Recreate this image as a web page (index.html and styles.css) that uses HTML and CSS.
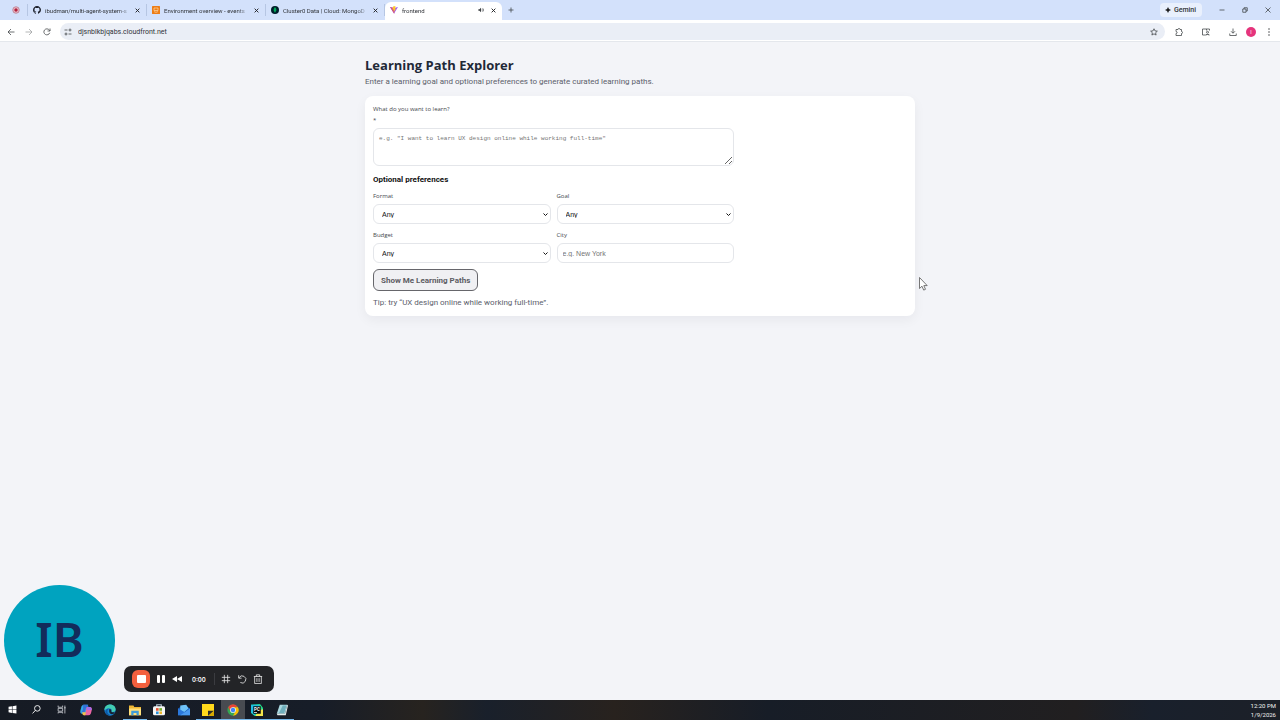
FILE: index.html
```html
<!DOCTYPE html>
<html lang="en">
<head>
  <meta charset="utf-8">
  <meta name="viewport" content="width=device-width, initial-scale=1">
  <title>frontend</title>
  <link rel="stylesheet" href="styles.css">
</head>
<body>

  <header class="browser">
    <nav class="tabs" aria-label="Tabs">
      <button class="tab tab-pinned" aria-label="Recording">
        <svg class="icon" viewBox="0 0 16 16"><circle cx="8" cy="8" r="6.5" fill="#e9c3cf" stroke="#b66f83" stroke-width="1.5"/><circle cx="8" cy="8" r="3.5" fill="#b3203c"/></svg>
      </button>
      <div class="tab">
        <svg class="icon" viewBox="0 0 16 16" fill="#1b1f2a"><path d="M8 0C3.58 0 0 3.58 0 8c0 3.54 2.29 6.53 5.47 7.59.4.07.55-.17.55-.38v-1.49c-2.01.37-2.53-.49-2.69-.94-.09-.23-.48-.94-.82-1.13-.28-.15-.68-.52-.01-.53.63-.01 1.08.58 1.23.82.72 1.21 1.87.87 2.33.66.07-.52.28-.87.51-1.07-1.78-.2-3.64-.89-3.64-3.95 0-.87.31-1.59.82-2.15-.08-.2-.36-1.02.08-2.12 0 0 .67-.21 2.2.82a7.6 7.6 0 0 1 4 0c1.53-1.04 2.2-.82 2.2-.82.44 1.1.16 1.92.08 2.12.51.56.82 1.27.82 2.15 0 3.07-1.87 3.75-3.65 3.95.29.25.54.73.54 1.48v2.2c0 .21.15.46.55.38A8 8 0 0 0 16 8c0-4.42-3.58-8-8-8z"/></svg>
        <span class="tab-title">ibudman/multi-agent-system-s</span>
        <button class="close" aria-label="Close tab"><svg viewBox="0 0 8 8"><path d="M1 1l6 6M7 1L1 7"/></svg></button>
      </div>
      <div class="tab">
        <svg class="icon" viewBox="0 0 16 16"><rect width="16" height="16" rx="1" fill="#ed7d16"/><path d="M4 4h8v5H4zM4 11c2 2 6 2 8 0" fill="none" stroke="#ffd9a8" stroke-width="1.4"/></svg>
        <span class="tab-title">Environment overview - events</span>
        <button class="close" aria-label="Close tab"><svg viewBox="0 0 8 8"><path d="M1 1l6 6M7 1L1 7"/></svg></button>
      </div>
      <div class="tab">
        <svg class="icon" viewBox="0 0 16 16"><circle cx="8" cy="8" r="8" fill="#001e2b"/><path d="M8 2c4 4 3.500 8 0 10.500C4.500 10 4 6 8 2zM7.600 12h.8v2h-.8z" fill="#00a85a"/></svg>
        <span class="tab-title">Cluster0 Data | Cloud: MongoD</span>
        <button class="close" aria-label="Close tab"><svg viewBox="0 0 8 8"><path d="M1 1l6 6M7 1L1 7"/></svg></button>
      </div>
      <div class="tab tab-active">
        <svg class="icon" viewBox="0 0 16 16"><path d="M0 2l8 13 8-13-8 2z" fill="#a05cf0"/><path d="M0 2l8 2 1 11-1 0z" fill="#d2547f"/><path d="M6 1l5-1-1 5h2l-4.500 7V7H5z" fill="#ffc72b"/></svg>
        <span class="tab-title">frontend</span>
        <button class="sound" aria-label="Mute tab"><svg viewBox="0 0 16 16"><path d="M1 6h3l4-4v12l-4-4H1z" fill="#3c4043"/><path d="M10 5c2 2 2 4 0 6M12 3c4 3 4 7 0 10" fill="none" stroke="#3c4043" stroke-width="1.500"/></svg></button>
        <button class="close" aria-label="Close tab"><svg viewBox="0 0 8 8"><path d="M1 1l6 6M7 1L1 7"/></svg></button>
      </div>
      <button class="new-tab" aria-label="New tab"><svg class="line" viewBox="0 0 12 12"><path d="M6 1v10M1 6h10"/></svg></button>

      <div class="window-controls">
        <button class="gemini"><svg viewBox="0 0 12 12"><path d="M6 0q1 5 6 6-5 1-6 6-1-5-6-6 5-1 6-6z" fill="#1f1f1f"/></svg>Gemini</button>
        <button aria-label="Minimize"><svg class="line" viewBox="0 0 12 12"><path d="M1 6h10"/></svg></button>
        <button aria-label="Restore"><svg class="line" viewBox="0 0 12 12"><path d="M1.500 4h6.500v6.500H1.500zM4 4V1.500h6.500V8H8"/></svg></button>
        <button aria-label="Close"><svg class="line" viewBox="0 0 12 12"><path d="M1 1l10 10M11 1L1 11"/></svg></button>
      </div>
    </nav>

    <div class="toolbar">
      <div class="nav-buttons">
        <button aria-label="Back"><svg class="line" viewBox="0 0 16 16"><path d="M15 8H2M8 2L2 8l6 6"/></svg></button>
        <button aria-label="Forward" disabled><svg class="line" viewBox="0 0 16 16"><path d="M1 8h13M8 2l6 6-6 6"/></svg></button>
        <button aria-label="Reload"><svg class="line" viewBox="0 0 16 16"><path d="M13.500 9.500A6 6 0 1 1 12.500 4L14 5.500M14 1v5H9"/></svg></button>
      </div>
      <div class="omnibox">
        <svg class="line" viewBox="0 0 16 16"><path d="M1 4h6M9 12h6"/><circle cx="12" cy="4" r="2"/><circle cx="4" cy="12" r="2"/></svg>
        <input class="address" type="text" aria-label="Address" value="djsnblkbjqabs.cloudfront.net">
        <button aria-label="Bookmark"><svg class="line" viewBox="0 0 16 16"><path d="M8 1.500l2 4.300 4.700.5-3.500 3.200 1 4.600L8 11.700l-4.200 2.400 1-4.600L1.300 6.300 6 5.800z"/></svg></button>
      </div>
      <div class="actions">
        <button aria-label="Extensions"><svg class="line" viewBox="0 0 16 16"><path d="M2 3h4c0-3 4-3 4 0h3v4c3 0 3 4 0 4v4H2v-4c3 0 3-4 0-4z"/></svg></button>
        <button aria-label="Side panel"><svg class="line" viewBox="0 0 16 16"><path d="M7 14H1V2h14v3M9 2v3"/><circle cx="11" cy="8.500" r="2"/><path d="M8 15v-2h6v2"/></svg></button>
        <button aria-label="Downloads"><svg class="line" viewBox="0 0 16 16"><path d="M8 1v9M4 6.500l4 4 4-4M1.500 11v4h13v-4"/></svg></button>
        <button class="profile" aria-label="Profile">I</button>
        <button aria-label="Menu"><svg viewBox="0 0 16 16" fill="#3c4043"><circle cx="8" cy="2" r="1.500"/><circle cx="8" cy="8" r="1.500"/><circle cx="8" cy="14" r="1.500"/></svg></button>
      </div>
    </div>
  </header>

  <main class="page">
    <div class="container">
      <h1>Learning Path Explorer</h1>
      <p class="subtitle">Enter a learning goal and optional preferences to generate curated learning paths.</p>

      <section class="card">
        <form class="search-form" onsubmit="return false;">
          <label class="query-label" for="query">What do you want to learn? <span class="required">*</span></label>
          <textarea id="query" placeholder='e.g. "I want to learn UX design online while working full-time"'></textarea>

          <h2>Optional preferences</h2>
          <div class="prefs">
            <div class="field">
              <label for="format">Format</label>
              <div class="select">
                <select id="format"><option>Any</option></select>
                <svg viewBox="0 0 10 6"><path d="M1 1l4 4 4-4"/></svg>
              </div>
            </div>
            <div class="field">
              <label for="goal">Goal</label>
              <div class="select">
                <select id="goal"><option>Any</option></select>
                <svg viewBox="0 0 10 6"><path d="M1 1l4 4 4-4"/></svg>
              </div>
            </div>
            <div class="field">
              <label for="budget">Budget</label>
              <div class="select">
                <select id="budget"><option>Any</option></select>
                <svg viewBox="0 0 10 6"><path d="M1 1l4 4 4-4"/></svg>
              </div>
            </div>
            <div class="field">
              <label for="city">City</label>
              <input id="city" type="text" placeholder="e.g. New York">
            </div>
          </div>

          <button class="submit" type="submit">Show Me Learning Paths</button>
        </form>
        <p class="tip">Tip: try “UX design online while working full-time”.</p>
      </section>
    </div>
  </main>

  <footer class="taskbar">
    <div class="apps">
      <button aria-label="Start"><svg viewBox="0 0 16 16" fill="#fff"><path d="M1 3l6-1v5.500H1zM8 2l7-1v6.500H8zM1 8.500h6V14l-6-1zM8 8.500h7V15l-7-1z"/></svg></button>
      <button aria-label="Search"><svg viewBox="0 0 16 16" fill="none" stroke="#fff" stroke-width="1.600"><circle cx="9.500" cy="6" r="5"/><path d="M6 9.500L1 15"/></svg></button>
      <button aria-label="Task view"><svg viewBox="0 0 16 16" fill="none" stroke="#d5d8dc" stroke-width="1.400"><path d="M2 1v3h8V1M2 6h8v5H2zM2 15v-2h8v2M14 1v14M12.500 5h3"/></svg></button>
      <button aria-label="Copilot"><svg viewBox="0 0 16 16"><path d="M5 1h6L7 13H3C0 13 0 10 1 7l1-4q1-2 3-2z" fill="#32a6e8"/><path d="M4 1h6l2 4H8L6 11H1q4-1 3-10z" fill="#3170d8"/><path d="M9 4h4q4 0 2.500 5l-1 3.500Q13.500 15 11 15H5l2-3z" fill="#e965a6"/><path d="M3 11h5l-1 4H5q-2 0-2-4z" fill="#f2c14b"/><path d="M10 4h4q2 1 1.500 4H9z" fill="#a46bea"/></svg></button>
      <button aria-label="Edge"><svg viewBox="0 0 16 16"><circle cx="8" cy="8" r="7.500" fill="#1684d1"/><path d="M.5 8C1 2 5 .5 8 .5c5 0 7.500 3.500 7.500 6.500S13 11 10 10.500c1-1 1-5-3-5S1 8 .5 8z" fill="#42cdb2"/><path d="M7 6c-4 2-3 8 2 9C4 16 1 12 2 9q1-3 5-3z" fill="#0e58a5"/><path d="M7 7q3-1 3 3.500 3 1 4.500 0-1 3-4 3Q6 13 7 7z" fill="#172231"/></svg></button>
      <button class="open" aria-label="File Explorer"><svg viewBox="0 0 16 16"><path d="M0 2h6l1 2h9v11H0z" fill="#eeb735"/><path d="M0 6h16v9H0z" fill="#ffdf7b"/><path d="M3 9h10v6h-3v-3H6v3H3z" fill="#3e9cd9"/></svg></button>
      <button aria-label="Store"><svg viewBox="0 0 16 16"><path d="M5 4V1h6v3" fill="none" stroke="#b8c8d5" stroke-width="1.500"/><rect y="3" width="16" height="12" rx="2" fill="#f6f6f6"/><path d="M4 5.500h3.500V9H4z" fill="#e65333"/><path d="M8.500 5.500H12V9H8.500z" fill="#72ae2e"/><path d="M4 10h3.500v3.500H4z" fill="#2c91d8"/><path d="M8.500 10H12v3.500H8.500z" fill="#edb62b"/></svg></button>
      <button aria-label="Mail"><svg viewBox="0 0 16 16"><path d="M0 6l8-5 8 5v9H0z" fill="#175bb7"/><path d="M3 2l8-1 3 5-6 5-5-3z" fill="#6fc3f8"/><path d="M0 6l9 5-4 4H0z" fill="#2b78db"/><path d="M16 6L3 15h13z" fill="#4a9af0"/></svg></button>
      <button class="open" aria-label="Sticky Notes"><svg viewBox="0 0 16 16"><path d="M0 0h16v16H0z" fill="#ffd91c"/><path d="M8 16V9h8z" fill="#2d2c28"/><path d="M8 16l8-7v7z" fill="#d7a900"/></svg></button>
      <button class="open current" aria-label="Chrome"><svg viewBox="0 0 16 16"><circle cx="8" cy="8" r="7.500" fill="#34a853"/><path d="M1.500 4.250A7.500 7.500 0 0 1 14.500 4.250H8L4.700 9.900z" fill="#ea4335"/><path d="M14.500 4.250A7.500 7.500 0 0 1 8 15.500l3.250-5.600L8 4.250z" fill="#fbbc05"/><circle cx="8" cy="8" r="3.800" fill="#fff"/><circle cx="8" cy="8" r="3" fill="#4285f4"/></svg></button>
      <button class="open" aria-label="PyCharm"><svg viewBox="0 0 16 16"><path d="M0 1l12-1 4 5v11H5L0 12z" fill="#21d789"/><path d="M0 1h11l2 7-9 7-4-4z" fill="#20bfe3"/><path d="M9 9l7-2v9H6z" fill="#f5e64b"/><path d="M3 3h10v10H3z" fill="#080808"/><text x="4" y="9" class="pc">PC</text><path d="M4 11h4v1H4z" fill="#fff"/></svg></button>
      <button class="open" aria-label="Notepad"><svg viewBox="0 0 16 16"><path d="M5 1h10l-3 12H1z" fill="#a9d7df"/><path d="M9 2h5l-3 10H4z" fill="#6faebc"/><path d="M1 13h11l3-12 1 1-3 13H2z" fill="#e4ecec"/></svg></button>
    </div>
    <div class="clock"><span>12:20 PM</span><span>1/9/2026</span></div>
  </footer>

  <div class="avatar">IB</div>

  <div class="recorder">
    <button class="stop" aria-label="Stop"><svg viewBox="0 0 18 18"><rect width="18" height="18" rx="6" fill="#f4603e"/><rect x="5" y="5" width="9" height="8" rx="1" fill="#fff"/></svg></button>
    <button aria-label="Pause"><svg viewBox="0 0 10 10" fill="#fff"><rect x="1" y="1" width="3" height="8" rx="1"/><rect x="6" y="1" width="3" height="8" rx="1"/></svg></button>
    <button aria-label="Rewind"><svg viewBox="0 0 10 10" fill="#fff"><path d="M5 2v6L0 5zM10 2v6L5 5z"/></svg></button>
    <span class="time">0:00</span>
    <span class="divider"></span>
    <button aria-label="Grid"><svg class="line light" viewBox="0 0 12 12"><path d="M4 1v10M8 1v10M1 4h10M1 8h10"/></svg></button>
    <button aria-label="Restart"><svg class="line light" viewBox="0 0 12 12"><path d="M2 1.500V5h3.500M2.500 4.500A4.300 4.300 0 1 1 4 10.200"/></svg></button>
    <button aria-label="Delete"><svg class="line light" viewBox="0 0 12 12"><path d="M1 3h10M4 3V1h4v2M2 3v8.500h8V3M4.700 5v4.500M7.300 5v4.500"/></svg></button>
  </div>

  <svg class="cursor" viewBox="0 0 9 14"><path d="M.5.5v11l2.500-2.300 1.700 3.900 1.800-.8-1.700-3.700h3.400z" fill="#fff" stroke="#555" stroke-width=".8"/></svg>

</body>
</html>
```
FILE: styles.css
```css
* {
  box-sizing: border-box;
}

body {
  margin: 0;
  min-height: 100vh;
  display: flex;
  flex-direction: column;
  background: #f3f4f8;
  color: #111827;
  font-family: Roboto, "Open Sans", sans-serif;
  font-size: 8px;
}

button {
  margin: 0;
  padding: 0;
  border: 0;
  background: none;
  font: inherit;
  color: inherit;
}

svg {
  display: block;
  flex: none;
}

.line {
  fill: none;
  stroke: #3c4043;
  stroke-width: 1.5;
}

.light {
  stroke: #e5e5e5;
  stroke-width: 1;
}

/* browser */

.browser {
  font-size: 6px;
  color: #303338;
}

.tabs {
  display: flex;
  align-items: center;
  height: 20px;
  padding-left: 4px;
  background: #d3e1fb;
}

.tab {
  display: flex;
  align-items: center;
  gap: 4px;
  width: 119px;
  height: 12px;
  padding: 0 6px 0 5px;
  border-right: 1px solid #b6c6e3;
}

.tab-pinned {
  width: 24px;
  padding-left: 8px;
}

.icon {
  width: 8px;
  height: 8px;
}

.tab-title {
  flex: 1;
  overflow: hidden;
  white-space: nowrap;
  -webkit-mask-image: linear-gradient(90deg, #000 85%, transparent);
  mask-image: linear-gradient(90deg, #000 85%, transparent);
}

.tab-active {
  align-self: flex-end;
  width: 117px;
  height: 18px;
  padding-bottom: 2px;
  border: 0;
  border-radius: 6px 6px 0 0;
  background: #fff;
}

.close svg {
  width: 5px;
  height: 5px;
  fill: none;
  stroke: #202124;
  stroke-width: 1.5;
}

.sound {
  margin-right: 3px;
}

.sound svg {
  width: 6px;
  height: 6px;
}

.new-tab {
  padding: 0 6px;
}

.new-tab svg {
  width: 6px;
  height: 6px;
}

.window-controls {
  display: flex;
  align-items: center;
  gap: 17px;
  margin-left: auto;
  padding-right: 9px;
}

.window-controls svg {
  width: 6px;
  height: 6px;
}

.gemini {
  display: flex;
  align-items: center;
  gap: 3px;
  height: 14px;
  padding: 0 6px 0 5px;
  border-radius: 4px;
  background: #e9f0fd;
  font-size: 7px;
  font-weight: 500;
}

.toolbar {
  display: flex;
  align-items: center;
  height: 22px;
  padding: 2px 7px 0;
  border-bottom: 1px solid #e4e7ec;
  background: #fff;
}

.nav-buttons {
  display: flex;
  gap: 10px;
  margin-right: 9px;
}

.toolbar svg {
  width: 8px;
  height: 8px;
}

.toolbar button:disabled {
  opacity: 0.5;
}

.omnibox {
  flex: 1;
  display: flex;
  align-items: center;
  gap: 6px;
  height: 17px;
  padding: 0 7px 0 4px;
  border-radius: 9px;
  background: #eaeef6;
}

.address {
  flex: 1;
  min-width: 0;
  padding: 0;
  border: 0;
  background: none;
  color: #303338;
  font: inherit;
  font-size: 7px;
}

.actions {
  display: flex;
  align-items: center;
  gap: 19px;
  margin-left: 10px;
}

.actions .profile {
  width: 10px;
  height: 10px;
  margin: 0 -10px;
  border-radius: 50%;
  background: #e5347c;
  color: #fff;
  font-size: 5px;
}

/* page */

.page {
  flex: 1;
  padding: 13px 16px 40px;
}

.container {
  max-width: 550px;
  margin: 0 auto;
}

h1 {
  margin: 0;
  color: #1f2937;
  font-family: "Open Sans", "Noto Sans", sans-serif;
  font-size: 13px;
  line-height: 20px;
}

.subtitle,
.tip {
  color: #5b606b;
  font-size: 8px;
  line-height: 12px;
}

.subtitle {
  margin: 1px 0 8px;
}

.card {
  padding: 8px 8px 7px;
  border-radius: 8px;
  background: #fff;
  box-shadow: 0 4px 12px rgba(15, 23, 42, 0.05);
}

.search-form {
  max-width: 361px;
}

label {
  display: block;
  color: #44474d;
  font-family: "Open Sans", "Noto Sans", sans-serif;
  font-size: 6px;
  line-height: 9px;
}

.query-label {
  line-height: 11px;
}

.required {
  display: block;
}

textarea,
select,
#city {
  display: block;
  width: 100%;
  border: 1px solid #e4e6ea;
  border-radius: 6px;
  background: #fff;
}

textarea {
  height: 38px;
  margin-top: 2px;
  padding: 5px;
  font-family: "Liberation Mono", monospace;
  font-size: 6px;
  line-height: 10px;
}

::placeholder {
  color: #757575;
}

h2 {
  margin: 8px 0 7px;
  color: #111;
  font-size: 8px;
  line-height: 11px;
}

.prefs {
  display: grid;
  grid-template-columns: 1fr 1fr;
  gap: 7px 6px;
}

.field label {
  margin-bottom: 3px;
}

select,
#city {
  height: 20px;
  font-family: "Liberation Sans", Arial, sans-serif;
  font-size: 7px;
  color: #111;
}

.select {
  position: relative;
}

select {
  appearance: none;
  padding: 0 16px 0 8px;
}

.select svg {
  position: absolute;
  top: 9px;
  right: 3px;
  width: 5px;
  height: 3px;
  fill: none;
  stroke: #111;
  stroke-width: 2;
  pointer-events: none;
}

#city {
  padding: 0 5px;
}

.submit {
  height: 22px;
  margin-top: 6px;
  padding: 0 7px;
  border: 1px solid #66666b;
  border-radius: 6px;
  background: #f0f0f3;
  color: #5c5c62;
  font-size: 8px;
  font-weight: 700;
}

.tip {
  margin: 6px 0 0;
}

/* taskbar */

.taskbar {
  display: flex;
  justify-content: space-between;
  height: 20px;
  background: linear-gradient(90deg, #161b24 0%, #171d28 25%, #27231f 33%, #19202b 38%, #28221e 48%, #171d27 60%, #211f20 84%, #19202c 90%, #1c2028 100%);
}

.apps {
  display: flex;
  width: 294px;
}

.apps button {
  flex: 1;
  display: flex;
  align-items: center;
  justify-content: center;
  border-bottom: 1px solid transparent;
}

.apps svg {
  width: 12px;
  height: 12px;
}

.apps button:nth-child(-n + 3) svg {
  width: 9px;
  height: 9px;
}

.apps .open {
  border-bottom-color: #76b9ed;
}

.apps .current {
  background: #484b51;
}

.pc {
  fill: #fff;
  font-size: 6px;
  font-weight: 700;
}

.clock {
  display: flex;
  flex-direction: column;
  align-items: flex-end;
  padding: 1px 4px 0 0;
  color: #f1f1f1;
  font-size: 6px;
  line-height: 9px;
}

/* screen recorder */

.avatar {
  position: fixed;
  left: 4px;
  bottom: 24px;
  display: flex;
  align-items: center;
  justify-content: center;
  width: 111px;
  height: 111px;
  padding-bottom: 3px;
  border-radius: 50%;
  background: #00a3bf;
  color: #132c5b;
  font-family: "Noto Sans", sans-serif;
  font-size: 47px;
  font-weight: 600;
}

.recorder {
  position: fixed;
  left: 124px;
  bottom: 28px;
  display: flex;
  align-items: center;
  gap: 6px;
  width: 150px;
  height: 26px;
  padding: 0 8px;
  border-radius: 7px;
  background: #232427;
  color: #fff;
}

.recorder svg {
  width: 10px;
  height: 10px;
}

.recorder .stop svg {
  width: 18px;
  height: 18px;
}

.time {
  margin: 0 2px 0 4px;
  font-family: Inter, sans-serif;
  font-size: 6px;
  font-weight: 600;
}

.divider {
  width: 1px;
  height: 12px;
  background: #3b3c40;
}

.cursor {
  position: fixed;
  top: 277px;
  left: 919px;
  width: 9px;
  height: 14px;
}
```
